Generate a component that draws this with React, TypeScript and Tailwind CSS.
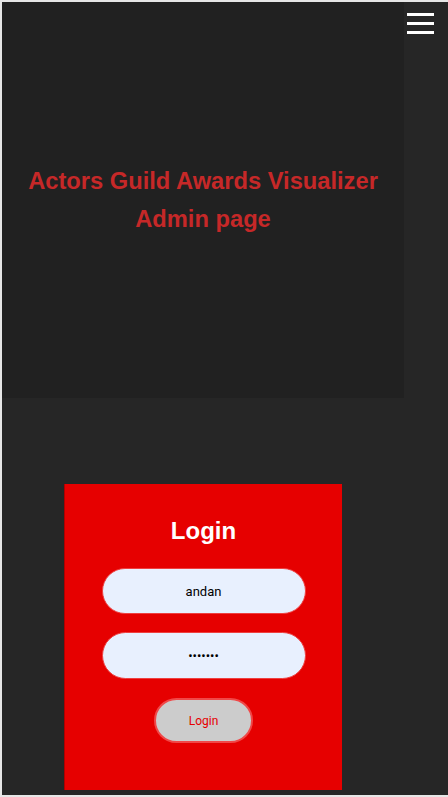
export default function App() {
  return (
    <div className="h-[797px] w-[448px] overflow-hidden border-2 border-r-0 border-[#e6e6e6] bg-[#262626] font-['Liberation_Sans',Arial,sans-serif]">
      <div className="flex">
        <div className="flex w-[402px] flex-col">
          <header className="flex h-[396px] flex-col items-center justify-center bg-[#212121]">
            <h1 className="text-center text-[23.7px] font-bold leading-[38px] text-[#c62828]">
              Actors Guild Awards Visualizer
            </h1>
            <h2 className="text-center text-[23.7px] font-bold leading-[38px] text-[#c62828]">
              Admin page
            </h2>
          </header>
          <div className="flex justify-center pt-[86px]">
            <form
              className="flex h-[306px] w-[278px] flex-col items-center border-l border-[#b00000] bg-[#e60000] pt-[33px]"
              onSubmit={(e) => e.preventDefault()}
            >
              <h3 className="text-[24px] font-bold leading-[28px] text-white">Login</h3>
              <input
                className="mt-[23px] h-[46px] w-[204px] rounded-full border border-[#ee4040] bg-[#e8f0fe] text-center font-['Roboto',sans-serif] text-[13px] text-black outline-none"
                defaultValue="andan"
              />
              <input
                type="password"
                className="mt-[18px] h-[47px] w-[204px] rounded-full border border-[#ee4040] bg-[#e8f0fe] text-center font-['Roboto',sans-serif] text-[13px] text-black outline-none"
                defaultValue="1234567"
              />
              <button className="mt-[19px] h-[45px] w-[99px] rounded-full border-2 border-[#f04848] bg-[#cccccc] font-['Roboto',sans-serif] text-[12px] text-[#e60000]">
                Login
              </button>
            </form>
          </div>
        </div>
        <div className="flex flex-1 justify-end pr-[14px] pt-[11px]">
          <div className="flex flex-col gap-[6px]">
            <span className="block h-[3px] w-[27px] bg-white" />
            <span className="block h-[3px] w-[27px] bg-white" />
            <span className="block h-[3px] w-[27px] bg-white" />
          </div>
        </div>
      </div>
    </div>
  );
}
